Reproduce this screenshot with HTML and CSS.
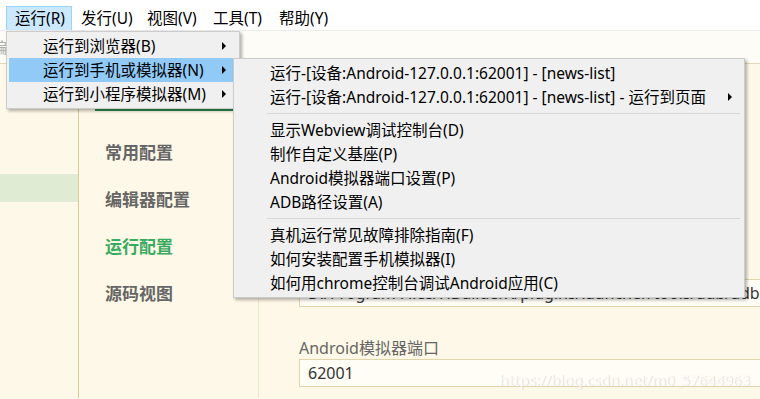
FILE: index.html
```html
<!DOCTYPE html>
<html lang="zh-CN">
<head>
  <meta charset="UTF-8" />
  <title>HBuilderX 运行配置</title>
  <link rel="stylesheet" href="styles.css">
</head>
<body>
  <div class="window">
    <div class="menubar">
      <span class="menu-item active">运行(R)</span>
      <span class="menu-item">发行(U)</span>
      <span class="menu-item">视图(V)</span>
      <span class="menu-item">工具(T)</span>
      <span class="menu-item">帮助(Y)</span>
    </div>
    <div class="tabstrip">
      <span class="tab">编辑器设置</span>
    </div>
    <div class="main">
      <div class="sidebar">
        <div class="side-row selected"></div>
      </div>
      <div class="nav">
        <div class="nav-head"></div>
        <div class="nav-item">常用配置</div>
        <div class="nav-item">编辑器配置</div>
        <div class="nav-item current">运行配置</div>
        <div class="nav-item">源码视图</div>
      </div>
      <div class="content">
        <div class="field">
          <label>adb路径</label>
          <div class="input">D:/Program Files/HBuilderX/plugins/launcher/tools/adb/adb.exe</div>
        </div>
        <div class="field">
          <label>Android模拟器端口</label>
          <div class="input">62001</div>
        </div>
        <div class="watermark">https://blog.csdn.net/m0_57644963</div>
      </div>
    </div>

    <ul class="dropdown run-menu">
      <li class="has-sub">运行到浏览器(B)</li>
      <li class="has-sub hover">运行到手机或模拟器(N)</li>
      <li class="has-sub">运行到小程序模拟器(M)</li>
    </ul>

    <ul class="dropdown sub-menu">
      <li>运行-[设备:Android-127.0.0.1:62001] - [news-list]</li>
      <li class="has-sub">运行-[设备:Android-127.0.0.1:62001] - [news-list] - 运行到页面</li>
      <li class="sep"></li>
      <li>显示Webview调试控制台(D)</li>
      <li>制作自定义基座(P)</li>
      <li>Android模拟器端口设置(P)</li>
      <li>ADB路径设置(A)</li>
      <li class="sep"></li>
      <li>真机运行常见故障排除指南(F)</li>
      <li>如何安装配置手机模拟器(I)</li>
      <li>如何用chrome控制台调试Android应用(C)</li>
    </ul>
  </div>
</body>
</html>
```

FILE: styles.css
```css
body {
  margin: 0;
  font-family: 'Noto Sans', 'Noto Sans CJK SC', sans-serif;
  color: #000;
  overflow: hidden;
}
.window {
  position: relative;
  width: 760px;
  height: 399px;
  overflow: hidden;
  background: #fdf8e7;
}
.menubar {
  display: flex;
  height: 31px;
  padding: 6px 0 0 6px;
  box-sizing: border-box;
  background: #fff;
  border-bottom: 1px solid #ececec;
}
.menu-item {
  width: 66px;
  box-sizing: border-box;
  padding-left: 8px;
  font-size: 15.5px;
  line-height: 23px;
  border: 1px solid transparent;
  border-bottom: none;
}
.menu-item.active {
  background: #cce8ff;
  border-color: #99d1ff;
}
.tabstrip {
  height: 33px;
  background: #fdfcf7;
  border-bottom: 1px solid #e3d7b4;
  box-sizing: border-box;
}
.tab {
  display: inline-block;
  margin-left: -8px;
  font-size: 15px;
  line-height: 32px;
  color: #aaa;
}
.main {
  display: flex;
  height: 334px;
}
.sidebar {
  flex: 0 0 78px;
  border-right: 1px solid #dccc9c;
  padding-top: 110px;
}
.side-row {
  height: 28px;
}
.side-row.selected {
  background: #dfebd3;
}
.nav {
  flex: 0 0 179px;
  border-right: 1px solid #efe6c9;
}
.nav-head {
  height: 47px;
  margin: 0 25px 0 16px;
  border-bottom: 3px solid #2e8b4b;
  box-sizing: border-box;
}
.nav-item {
  padding-left: 26px;
  font-size: 17px;
  font-weight: bold;
  color: #666;
  height: 47px;
  line-height: 47px;
}
.nav-head + .nav-item {
  margin-top: 18px;
}
.nav-item.current {
  color: #3aaa5f;
}
.content {
  position: relative;
  flex: 1;
  min-width: 0;
  padding: 193px 0 0 40px;
}
.field {
  margin-bottom: 30px;
}
.field label {
  display: block;
  font-size: 16px;
  line-height: 22px;
  color: #666;
}
.input {
  height: 28px;
  box-sizing: border-box;
  border: 1px solid #e2d5ab;
  border-right: none;
  background: #fffdf6;
  padding-left: 8px;
  font-size: 16px;
  line-height: 26px;
  color: #333;
  white-space: nowrap;
  overflow: hidden;
}
.watermark {
  position: absolute;
  right: 10px;
  bottom: 8px;
  font-size: 15px;
  color: rgba(255, 255, 255, 0.9);
  text-shadow: 1px 0 1px rgba(190, 190, 190, 0.6);
}
.dropdown {
  position: absolute;
  margin: 0;
  padding: 2px;
  list-style: none;
  background: #f0f0f0;
  border: 1px solid #cccccc;
  box-shadow: 2px 2px 3px rgba(0, 0, 0, 0.3);
  font-size: 15.5px;
}
.dropdown li {
  position: relative;
  height: 24px;
  line-height: 24px;
  white-space: nowrap;
}
.dropdown .has-sub::after {
  content: '';
  position: absolute;
  top: 8px;
  border-left: 4px solid #000;
  border-top: 4px solid transparent;
  border-bottom: 4px solid transparent;
}
.run-menu {
  left: 6px;
  top: 31px;
  width: 228px;
}
.run-menu li {
  padding-left: 34px;
}
.run-menu .has-sub::after {
  left: 213px;
}
.run-menu li.hover {
  background: #91c9f7;
}
.sub-menu {
  left: 233px;
  top: 58px;
  width: 506px;
}
.sub-menu li {
  padding-left: 34px;
}
.sub-menu .has-sub::after {
  left: 492px;
}
.sub-menu li.sep {
  height: 9px;
  padding: 0;
  margin: 0 2px 0 31px;
  background: linear-gradient(#f0f0f0 4px, #d7d7d7 4px, #d7d7d7 5px, #f0f0f0 5px);
}
```
